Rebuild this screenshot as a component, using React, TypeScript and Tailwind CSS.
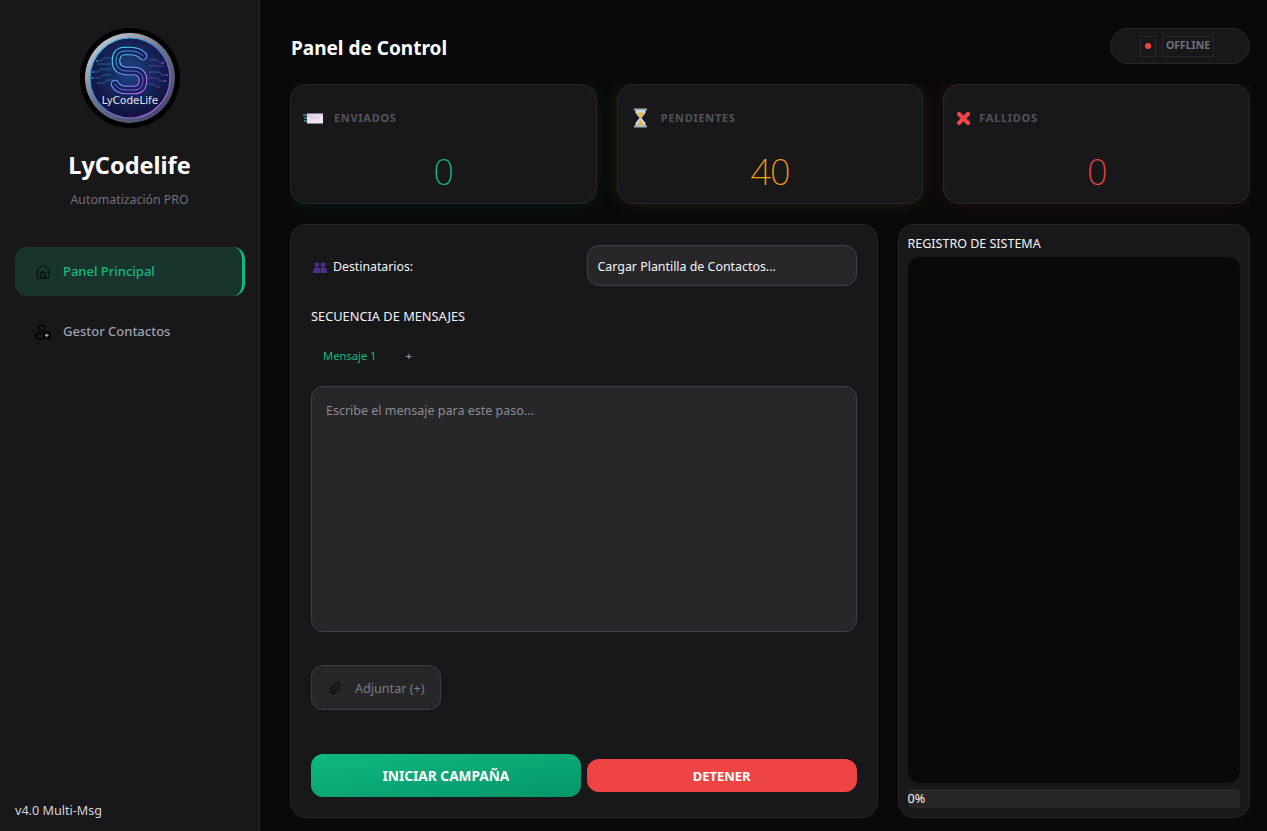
import { House, Paperclip } from 'lucide-react';
import type { ReactNode } from 'react';

const ESS = 'M63 28 Q59 23 50 23 H45 Q36 23 36 33 Q36 42 46 43 H54 Q63 44 63 52 Q63 62 54 62 H46 Q38 62 35 56';

function Logo() {
  return (
    <svg viewBox="0 0 100 100" className="w-[100px] h-[100px]">
      <defs>
        <linearGradient id="ring" x1="0.1" y1="0" x2="0.9" y2="1">
          <stop offset="0" stopColor="#d5d9e0" />
          <stop offset="0.45" stopColor="#6d7789" />
          <stop offset="1" stopColor="#3d3f66" />
        </linearGradient>
        <radialGradient id="disc" cx="0.5" cy="0.42" r="0.6">
          <stop offset="0" stopColor="#1f4682" />
          <stop offset="0.65" stopColor="#141f52" />
          <stop offset="1" stopColor="#120f38" />
        </radialGradient>
        <linearGradient id="edge" x1="0" y1="0" x2="1" y2="1">
          <stop offset="0" stopColor="#36d6e8" />
          <stop offset="0.5" stopColor="#3f6fd0" />
          <stop offset="1" stopColor="#d05cf0" />
        </linearGradient>
        <linearGradient id="ess" x1="0.2" y1="0" x2="0.8" y2="1">
          <stop offset="0" stopColor="#45e0f0" />
          <stop offset="0.55" stopColor="#7a96f5" />
          <stop offset="1" stopColor="#d068f5" />
        </linearGradient>
      </defs>
      <circle cx="50" cy="50" r="50" fill="#000" />
      <circle cx="50" cy="50" r="45" fill="url(#ring)" />
      <circle cx="50" cy="50" r="40" fill="url(#disc)" stroke="url(#edge)" strokeWidth="1.2" />
      <g stroke="#2fa6c8" strokeWidth="0.6" fill="none" opacity="0.8">
        <path d="M31 30h-7l-3 3h-4M31 36h-14M31 41h-10l-3 3h-5M31 47h-8l-3 3h-8M33 52h-6l-3 3h-7" />
      </g>
      <g stroke="#8f62dc" strokeWidth="0.6" fill="none" opacity="0.8">
        <path d="M69 32h8l3 3h3M69 38h15M69 44h10l3 3h5M69 50h8l3 3h5M68 56h6l3 3h3" />
      </g>
      <g fill="#49c4dc">
        <circle cx="17" cy="33" r="0.8" />
        <circle cx="13" cy="44" r="0.8" />
        <circle cx="12" cy="50" r="0.8" />
      </g>
      <g fill="#a772e8">
        <circle cx="83" cy="35" r="0.8" />
        <circle cx="87" cy="47" r="0.8" />
        <circle cx="85" cy="53" r="0.8" />
      </g>
      <path d={ESS} fill="none" stroke="url(#ess)" strokeWidth="8.6" strokeLinecap="round" />
      <path d={ESS} fill="none" stroke="#142463" strokeWidth="6.4" strokeLinecap="round" />
      <path d={ESS} fill="none" stroke="url(#ess)" strokeWidth="0.9" strokeLinecap="round" opacity="0.8" />
      <text x="50" y="76" textAnchor="middle" fontSize="10.4" fill="#dfe4f0" fontFamily="'DejaVu Sans', sans-serif">
        LyCodeLife
      </text>
    </svg>
  );
}

function MailIcon() {
  return (
    <svg viewBox="0 0 20 11" className="w-5 h-[11px] mr-[11px] shrink-0">
      <defs>
        <linearGradient id="mail" x1="0" y1="0" x2="1" y2="1">
          <stop offset="0" stopColor="#e4d2ee" />
          <stop offset="1" stopColor="#f6eefa" />
        </linearGradient>
      </defs>
      <rect x="4" y="0.5" width="16" height="10" fill="url(#mail)" />
      <path d="M4 1l8 5 8-5" stroke="#cbb4d8" strokeWidth="0.6" fill="none" />
      <path d="M0 2h4M1 5h3M1 8h3" stroke="#4fd0e0" strokeWidth="1.1" />
    </svg>
  );
}

function HourglassIcon() {
  return (
    <svg viewBox="0 0 15 20" className="w-[15px] h-5 ml-[3px] mr-[13px] shrink-0">
      <path d="M2.5 2h10v3L8.5 10l4 5v3h-10v-3l4-5-4-5z" fill="#bfe3f5" />
      <path d="M3.5 4.5h8L8.5 9.5v1h-2v-1z" fill="#f2b04a" />
      <path d="M7.5 11.5l3.8 5.5H3.7z" fill="#f2b04a" />
      <rect x="1" y="0.5" width="13" height="2" fill="#a8adb5" />
      <rect x="1" y="17.5" width="13" height="2" fill="#a8adb5" />
    </svg>
  );
}

function CrossIcon() {
  return (
    <svg viewBox="0 0 15 15" className="w-[15px] h-[15px] mr-2 shrink-0">
      <path d="M3 3l9 9M12 3l-9 9" stroke="#f04449" strokeWidth="4.2" strokeLinecap="round" />
    </svg>
  );
}

function PeopleIcon() {
  return (
    <svg viewBox="0 0 14 11" className="w-[14px] h-[11px] shrink-0">
      <g fill="#4c2f8a">
        <circle cx="4" cy="2.8" r="2.4" />
        <circle cx="10" cy="2.8" r="2.4" />
        <path d="M0 11V8.2C0 6.6 1.6 5.6 4 5.6s3 1 3 2.6V11z" />
        <path d="M7.4 11V8.2c0-1 .4-2 .8-2.4.5-.1 1.1-.2 1.8-.2 2.4 0 4 1 4 2.6V11z" />
      </g>
    </svg>
  );
}

function ContactAddIcon() {
  return (
    <svg viewBox="0 0 16 16" className="w-4 h-4 shrink-0" fill="none" stroke="#000" strokeWidth="1.25">
      <circle cx="6.5" cy="3.8" r="3" />
      <path d="M7 9H4a3 3 0 0 0 0 6h4" />
      <circle cx="11.8" cy="11.3" r="3.8" fill="#000" />
      <path d="M11.8 9.4v3.8M9.9 11.3h3.8" stroke="#d4d4d8" strokeWidth="0.9" />
    </svg>
  );
}

function StatCard({
  icon,
  label,
  value,
  cardClass,
  valueClass,
}: {
  icon: ReactNode;
  label: string;
  value: string;
  cardClass: string;
  valueClass: string;
}) {
  return (
    <div className={`h-[120px] bg-[#18181b] border rounded-2xl pl-3 pt-[23px] ${cardClass}`}>
      <div className="h-5 flex items-center">
        {icon}
        <span className="text-[11px] font-bold tracking-[0.7px] text-[#52525b]">{label}</span>
      </div>
      <div className={`mt-[24px] -ml-3 text-center text-[36px] leading-[40px] font-extralight tracking-[-1px] ${valueClass}`}>
        {value}
      </div>
    </div>
  );
}

export default function App() {
  return (
    <div className="h-[831px] flex bg-[#09090b] overflow-hidden text-[#f4f4f5] font-['Noto_Sans','Open_Sans',sans-serif]">
      {/* Sidebar */}
      <aside className="w-[260px] shrink-0 bg-[#18181b] border-r border-[#27272a] flex flex-col pl-[15px] pr-[14px]">
        <div className="mt-7 flex justify-center pr-px">
          <Logo />
        </div>
        <h1 className="mt-[19px] pr-px text-center text-[23.5px] leading-9 font-bold text-white">LyCodelife</h1>
        <p className="mt-[7px] pr-px text-center text-[12.3px] leading-5 text-[#71717a]">Automatización PRO</p>

        <nav className="mt-[37px] flex flex-col gap-[11px]">
          <div className="h-[49px] flex items-center pl-5 gap-3 rounded-xl bg-[#18342c] border-r-[3px] border-[#10b981] text-[#10b981] text-[13px] font-medium">
            <House size={16} strokeWidth={1.3} color="#000" />
            <span className="pt-px">Panel Principal</span>
          </div>
          <div className="h-[49px] flex items-center pl-5 gap-3 text-[#a1a1aa] text-[13px] font-medium">
            <ContactAddIcon />
            <span>Gestor Contactos</span>
          </div>
        </nav>

        <div className="mt-auto mb-[10px] text-[12.6px] leading-5 text-[#d4d4d8]">v4.0 Multi-Msg</div>
      </aside>

      {/* Contenido */}
      <main className="flex-1 min-w-0 pl-[30px] pr-[17px] flex flex-col">
        <header className="h-[84px] shrink-0 flex items-start justify-between pt-7">
          <h2 className="ml-px text-[19px] leading-10 font-bold text-white">Panel de Control</h2>
          <div className="w-[140px] h-9 flex items-center pl-[29px] gap-[6px] rounded-full bg-[#18181b] border border-[#27272a]">
            <span className="w-4 h-[21px] flex items-center justify-center border border-[#27272a]">
              <span className="w-[6px] h-[6px] rounded-full bg-[#ef4444]" />
            </span>
            <span className="w-[52px] h-[21px] flex items-center justify-center border border-[#27272a] text-[10.5px] font-bold text-[#71717a]">
              OFFLINE
            </span>
          </div>
        </header>

        <div className="shrink-0 grid grid-cols-3 gap-5 pb-5 overflow-hidden">
          <StatCard
            icon={<MailIcon />}
            label="ENVIADOS"
            value="0"
            cardClass="border-[#27272a] shadow-[0_0_20px_rgba(16,185,129,0.12)]"
            valueClass="text-[#10b981]"
          />
          <StatCard
            icon={<HourglassIcon />}
            label="PENDIENTES"
            value="40"
            cardClass="border-[#27272a] shadow-[0_0_20px_rgba(245,158,11,0.12)]"
            valueClass="text-[#f59e0b]"
          />
          <StatCard
            icon={<CrossIcon />}
            label="FALLIDOS"
            value="0"
            cardClass="border-[#27272a] shadow-[0_0_20px_rgba(239,68,68,0.12)]"
            valueClass="text-[#ef4444]"
          />
        </div>

        <div className="h-[594px] shrink-0 flex gap-5">
          {/* Panel de campaña */}
          <section className="w-[587.5px] shrink-0 bg-[#18181b] border border-[#27272a] rounded-2xl pt-5 px-5 flex flex-col">
            <div className="h-[41px] flex items-center justify-between">
              <div className="flex items-center gap-[6px] pl-[2px] pt-[3px] text-[12.3px]">
                <PeopleIcon />
                <span>Destinatarios:</span>
              </div>
              <button className="w-[270px] h-[41px] text-left pl-[10px] pt-[3px] bg-[#27272a] border border-[#3f3f46] rounded-xl text-[12.4px] text-[#f4f4f5]">
                Cargar Plantilla de Contactos...
              </button>
            </div>

            <div className="mt-5 text-[12.8px] leading-5">SECUENCIA DE MENSAJES</div>

            <div className="mt-5 h-5 flex items-center text-[11.2px]">
              <span className="ml-3 text-[#10b981]">Mensaje 1</span>
              <span className="ml-[29px] text-[#a1a1aa]">+</span>
            </div>

            <textarea
              className="mt-5 h-[246px] w-full resize-none outline-none bg-[#27272a] border border-[#3f3f46] rounded-xl px-[14px] py-[14px] text-[12.5px] leading-5 placeholder:text-[#8b8b90]"
              placeholder="Escribe el mensaje para este paso..."
            />

            <div className="mt-[33px] w-[130px] h-[45px] flex items-center pl-4 gap-[13px] bg-[#27272a] border border-dotted border-[#52525b] rounded-xl text-[12.6px] text-[#7a7a84]">
              <Paperclip size={14} strokeWidth={1.6} color="#000" />
              <span className="pt-1">Adjuntar (+)</span>
            </div>

            <div className="mt-[44px] h-[43px] flex items-center gap-[6px]">
              <button className="w-[270px] h-[43px] pt-px rounded-xl bg-gradient-to-br from-[#10b981] to-[#059669] text-[13.7px] font-bold text-white">
                INICIAR CAMPAÑA
              </button>
              <button className="w-[270px] h-[33px] pt-[2px] rounded-xl bg-[#ef4444] text-[13px] font-bold text-white">
                DETENER
              </button>
            </div>
          </section>

          {/* Registro */}
          <section className="flex-1 min-w-0 bg-[#18181b] border border-[#27272a] rounded-2xl px-[9px] pt-[9px] pb-[9px] flex flex-col">
            <div className="h-[23px] text-[12.5px] leading-5 shrink-0">REGISTRO DE SISTEMA</div>
            <div className="flex-1 bg-[#09090b] rounded-xl" />
            <div className="mt-[6px] h-[19px] shrink-0 bg-[#27272a] rounded text-[12.6px] leading-[19px]">0%</div>
          </section>
        </div>
      </main>
    </div>
  );
}
